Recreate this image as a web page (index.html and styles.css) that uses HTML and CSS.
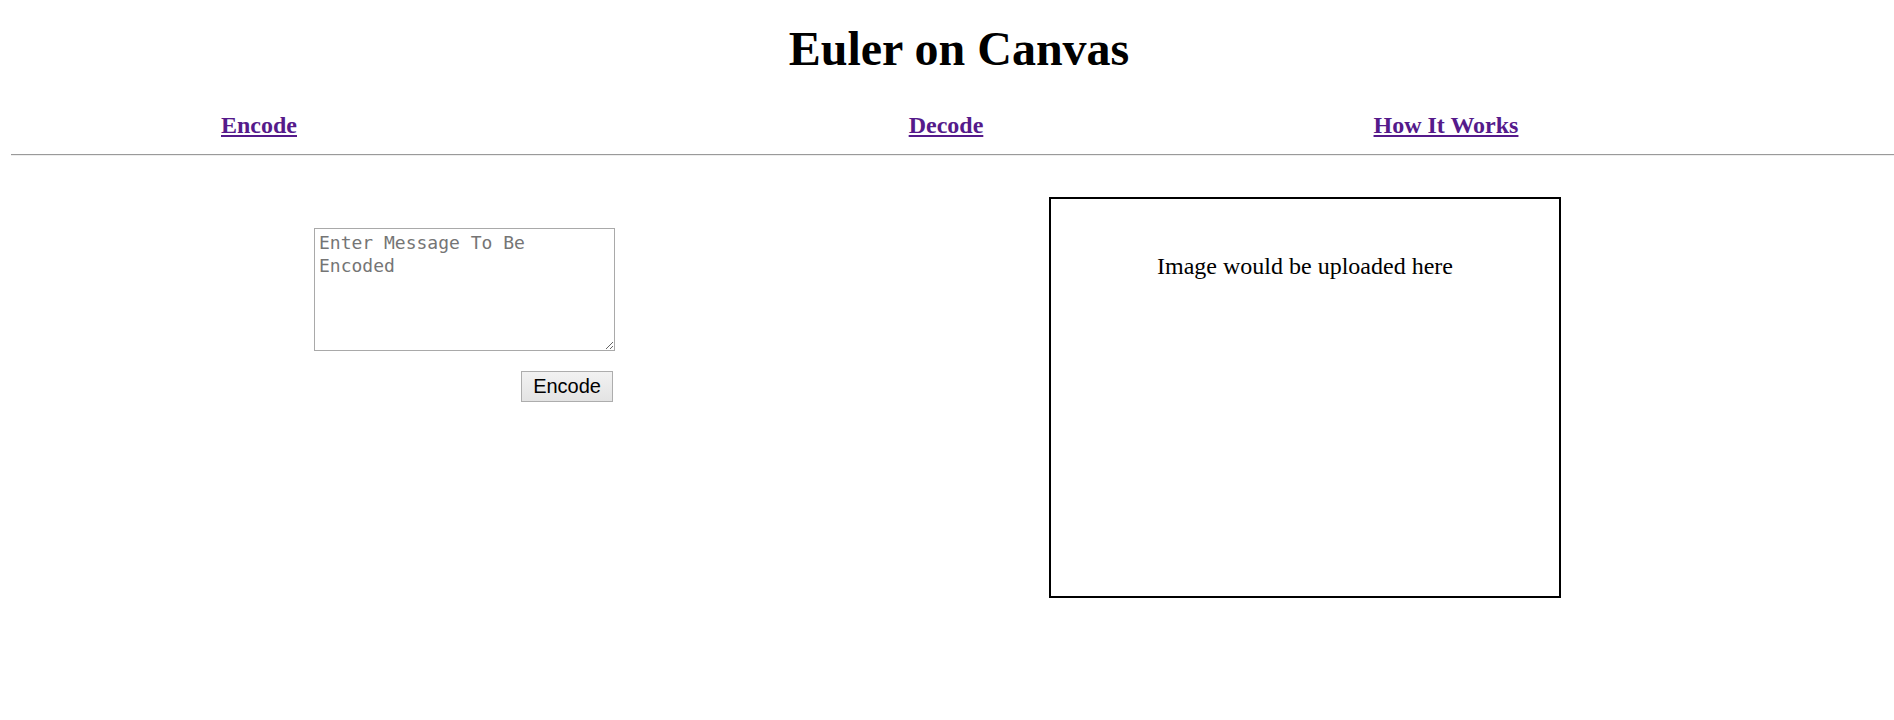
FILE: index.html
```html
<!DOCTYPE html>
<html lang="en">
<head>
<meta charset="utf-8">
<title>Euler on Canvas</title>
<link rel="stylesheet" href="styles.css">
</head>
<body>
<header class="site-header">
  <h1 class="title">Euler on Canvas</h1>
  <nav class="nav">
    <div class="nav-item nav-item-encode"><a class="nav-link" href="#encode">Encode</a></div>
    <div class="nav-item nav-item-decode"><a class="nav-link" href="#decode">Decode</a></div>
    <div class="nav-item nav-item-how"><a class="nav-link" href="#how">How It Works</a></div>
  </nav>
  <hr class="divider">
</header>
<main class="workspace">
  <section class="encoder">
    <textarea class="message" placeholder="Enter Message To Be Encoded"></textarea>
    <button class="encode-btn" type="button">Encode</button>
  </section>
  <section class="preview">
    <p class="preview-text">Image would be uploaded here</p>
  </section>
</main>
</body>
</html>
```
FILE: styles.css
```css
body {
  margin: 8px 0 8px 8px;
  font-family: "Liberation Serif", "Times New Roman", serif;
  color: #000;
  background: #fff;
}
.title {
  margin: 13px 0 0;
  padding-left: 16px;
  text-align: center;
  font-size: 48px;
  font-weight: bold;
  line-height: normal;
}
.nav {
  display: flex;
  margin-top: 36px;
}
.nav-item {
  text-align: center;
  font-size: 24px;
  font-weight: bold;
  line-height: normal;
}
.nav-item-encode {
  width: 502px;
}
.nav-item-decode {
  width: 400px;
  margin-left: 236px;
}
.nav-item-how {
  width: 400px;
  margin-left: 100px;
}
.nav-link {
  color: #551a8b;
  text-decoration: underline;
}
.divider {
  height: 0;
  margin: 15px 0 0 3px;
  border: none;
  border-top: 1px solid #9a9a9a;
  border-bottom: 1px solid #eeeeee;
}
.workspace {
  display: flex;
  align-items: flex-start;
}
.encoder {
  display: flex;
  flex-direction: column;
  align-items: flex-end;
  margin-left: 306px;
  margin-top: 72px;
}
.message {
  box-sizing: border-box;
  width: 301px;
  height: 123px;
  margin: 0;
  padding: 2px 4px;
  border: 1px solid #a9a9a9;
  font-family: "DejaVu Sans Mono", "Liberation Mono", monospace;
  font-size: 18px;
  line-height: 23px;
  resize: both;
}
.message::placeholder {
  color: #757575;
}
.encode-btn {
  margin: 20px 2px 0 0;
  padding: 3px 11px;
  border: 1px solid #adadad;
  border-radius: 0;
  background: linear-gradient(#f2f2f2, #e3e3e3);
  font-family: "Liberation Sans", Arial, sans-serif;
  font-size: 20px;
  line-height: 23px;
  color: #000;
}
.preview {
  box-sizing: border-box;
  width: 512px;
  height: 401px;
  margin-left: 434px;
  margin-top: 41px;
  border: 2px solid #000;
  padding-top: 54px;
}
.preview-text {
  margin: 0;
  text-align: center;
  font-size: 24px;
  line-height: normal;
}
```
